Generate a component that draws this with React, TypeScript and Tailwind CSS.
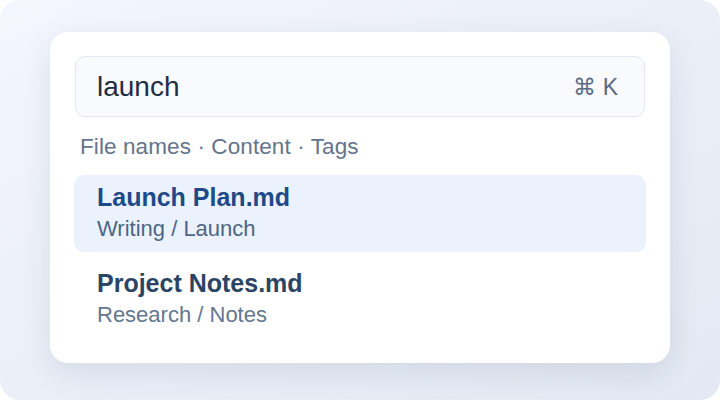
import React from "react";

const results = [
  { title: "Launch Plan.md", path: "Writing / Launch", active: true },
  { title: "Project Notes.md", path: "Research / Notes", active: false },
];

export default function App() {
  return (
    <div
      className="w-[720px] h-[400px] rounded-[20px] bg-gradient-to-br from-[#f3f6fd] to-[#e3e8f2] pt-8 pl-[50px]"
      style={{ fontFamily: '"Liberation Sans", Arial, sans-serif' }}
    >
      <div className="w-[620px] h-[331px] rounded-[18px] bg-white shadow-[0_10px_30px_rgba(30,50,90,0.10)] px-6 pt-6">
        <div className="flex items-center justify-between h-[61px] ml-px w-[570px] rounded-[10px] border border-[#e2e8f2] bg-[#f8fafd] pl-[21px] pr-[26px]">
          <span className="text-[28px] leading-8 text-[#1f2d44]">launch</span>
          <span className="text-[23px] leading-7 text-[#5a6b85]">⌘ K</span>
        </div>
        <p className="mt-[17px] ml-[6px] text-[22.5px] leading-[26px] tracking-[0.1px] text-[#64748b]">
          File names · Content · Tags
        </p>
        <div className="mt-[15px] flex flex-col gap-[9px]">
          {results.map((r) => (
            <div
              key={r.title}
              className={`w-[572px] rounded-[10px] pl-[23px] pt-[7px] pb-[10px] ${r.active ? "bg-[#ebf2fd]" : "bg-white"}`}
            >
              <div className={`text-[25px] leading-[30px] font-bold ${r.active ? "text-[#1f4a87]" : "text-[#2b4463]"}`}>{r.title}</div>
              <div className={`mt-[4px] text-[22px] leading-[26px] ${r.active ? "text-[#4e6585]" : "text-[#64778f]"}`}>{r.path}</div>
            </div>
          ))}
        </div>
      </div>
    </div>
  );
}
